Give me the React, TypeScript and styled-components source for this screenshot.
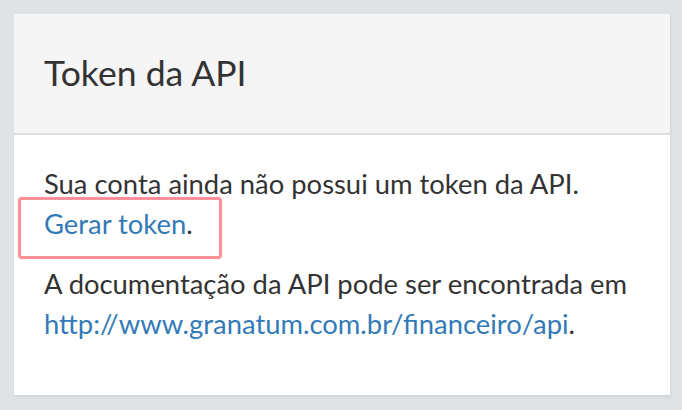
import styled, { createGlobalStyle } from 'styled-components'

const GlobalStyle = createGlobalStyle`
	html,
	body {
		margin: 0;
		padding: 0;
		background: #dfe3e6;
	}
	body {
		font-family: Lato, 'Open Sans', 'Liberation Sans', sans-serif;
		color: #333;
	}
`

export default function App() {
	return (
		<>
			<GlobalStyle />
			<Page>
				<Panel>
					<PanelHeading>
						<PanelTitle>Token da API</PanelTitle>
					</PanelHeading>
					<PanelBody>
						<Paragraph>
							Sua conta ainda não possui um token da API.
							<br />
							<Link href="#">Gerar token</Link>.
						</Paragraph>
						<Paragraph>
							A documentação da API pode ser encontrada em
							<br />
							<Link href="#">http://www.granatum.com.br/financeiro/api</Link>.
						</Paragraph>
						<Highlight />
					</PanelBody>
				</Panel>
			</Page>
		</>
	)
}

const Page = styled.div`
	padding: 14px 12px 15px 14px;
`

const Panel = styled.div`
	width: 656px;
	background: #fff;
	box-shadow: 1px 2px 3px rgba(0, 0, 0, 0.07);
`

const PanelHeading = styled.div`
	background: #f5f5f5;
	border-bottom: 2px solid #dedede;
	padding: 37px 30px 39px;
`

const PanelTitle = styled.h3`
	margin: 0;
	font-size: 35.6px;
	line-height: 43px;
	font-weight: 400;
	color: #333;
`

const PanelBody = styled.div`
	position: relative;
	padding: 29px 30px 31px;
`

const Paragraph = styled.p`
	margin: 0 0 20px;
	font-size: 27.4px;
	line-height: 40px;
	white-space: nowrap;
`

const Link = styled.a`
	color: #337ab7;
	text-decoration: none;
`

const Highlight = styled.div`
	position: absolute;
	left: 4px;
	top: 62px;
	width: 204px;
	height: 62px;
	box-sizing: border-box;
	border: 3px solid rgba(255, 70, 90, 0.6);
	border-radius: 4px;
	box-shadow: 0 0 1px rgba(255, 70, 90, 0.5);
	pointer-events: none;
`
